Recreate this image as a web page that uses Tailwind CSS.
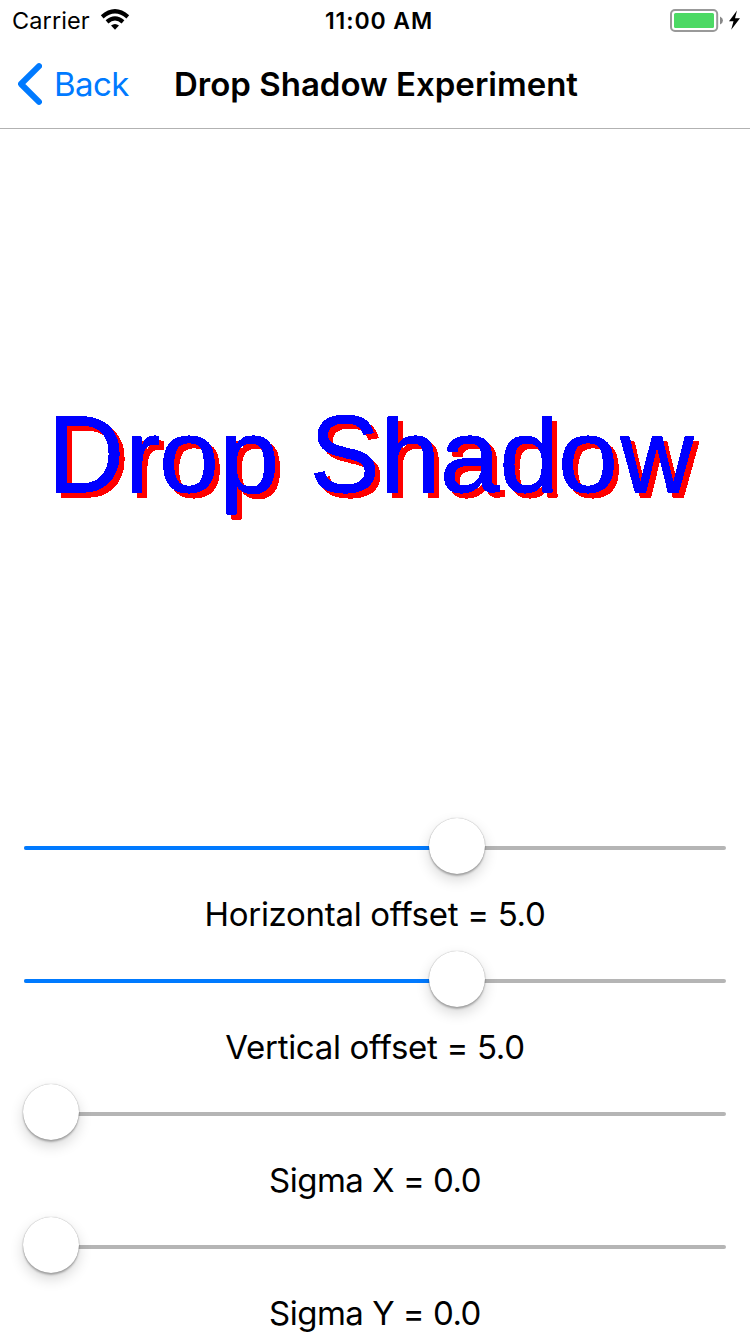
<!DOCTYPE html>
<html lang="en"><head><meta charset="utf-8"><title>Drop Shadow Experiment</title>
<script src="https://cdn.jsdelivr.net/npm/@tailwindcss/browser@4"></script></head>
<body class="bg-white">
<main class="flex h-[1334px] w-[750px] flex-col overflow-hidden bg-white font-['Inter','Liberation_Sans',sans-serif] text-black">
  <header class="h-[129px] shrink-0 border-b border-[#b2b2b2]">
    <div class="grid h-10 grid-cols-3 items-center pl-3 pr-[10px]">
      <div class="flex items-center gap-[10px]">
        <span class="translate-y-px text-[23.5px] leading-10 tracking-[0.1px]">Carrier</span>
        <svg class="h-[22px] w-[30px]" viewBox="0 0 30 22" fill="none" stroke="#000" stroke-width="4.2"><path d="M2.2 7.8Q15-3.2 27.8 7.8M7 12.8Q15 6 23 12.8"/><path d="M11 16.6Q15 13.2 19 16.6L15 20.8Z" fill="#000" stroke="none"/></svg>
      </div>
      <time class="translate-y-px pl-1.5 text-center text-[23px] font-semibold leading-10 tracking-[0.9px] whitespace-nowrap">11:00 AM</time>
      <svg class="h-[24px] w-[70px] justify-self-end" viewBox="670 8 70 24"><rect x="671" y="10" width="46.2" height="21" rx="4" fill="none" stroke="#999" stroke-width="2"/><rect x="674" y="13" width="40" height="15" rx="1.5" fill="#4cd964"/><path d="M720 16.5Q723 18 723 20.5T720 24.5Z" fill="#888"/><path d="M737 10.5L729 21.3H733.5L731.2 29.7L740 18.2H735Z"/></svg>
    </div>
    <nav class="grid h-[88px] grid-cols-[174px_1fr] items-center">
      <a class="flex items-center gap-3 pl-[18px] text-[#007aff]"><svg class="h-[42px] w-[24px]" viewBox="0 0 24 42" fill="none" stroke="currentColor" stroke-width="6" stroke-linecap="round" stroke-linejoin="round"><path d="M21 3.2L3 21L21 38.8"/></svg><span class="text-[33px] leading-10 tracking-[-0.6px]">Back</span></a>
      <h1 class="text-[33px] font-semibold leading-10 whitespace-nowrap">Drop Shadow Experiment</h1>
    </nav>
  </header>
  <section class="h-[667px] shrink-0">
    <svg class="h-full w-full" viewBox="0 129 750 667">
      <defs><filter id="shadow" x="0" y="380" width="750" height="170" filterUnits="userSpaceOnUse" color-interpolation-filters="sRGB">
        <feComponentTransfer in="SourceAlpha" result="mask"><feFuncA type="discrete" tableValues="0 0 1 1 1"/></feComponentTransfer>
        <feFlood flood-color="#00f"/><feComposite in2="mask" operator="in" result="face"/>
        <feOffset in="mask" dx="5" dy="5" result="shift"/>
        <feFlood flood-color="#f00"/><feComposite in2="shift" operator="in" result="cast"/>
        <feMerge><feMergeNode in="cast"/><feMergeNode in="face"/></feMerge></filter></defs>
      <g filter="url(#shadow)" font-family="Liberation Sans, Arial, sans-serif" font-size="107" stroke="#000" stroke-width="1"><text transform="translate(47.9 492.4) scale(.985 1.025)">D</text><text transform="translate(0 492.4) scale(1 .973)" x="125.1 159.2 219.5">rop</text><text transform="translate(310 492.4) scale(.975 1.025)">S</text><text transform="translate(0 492.4) scale(1 .973)" x="380.5 440 499.4 558.2">hado</text><text transform="translate(620.5 492.4) scale(.945 .973)">w</text></g>
    </svg>
  </section>
  <section class="flex flex-col">
    <div class="h-[133px]">
      <div class="relative mx-6 mt-[50px] h-1 rounded-full bg-[#b5b5b5]"><div class="h-1 w-[410px] rounded-full bg-[#007aff]"></div><div class="absolute left-[405px] -top-7 size-14 rounded-full bg-white shadow-[0_0_1px_rgba(0,0,0,.4),0_2px_2px_rgba(0,0,0,.25),0_6px_14px_rgba(0,0,0,.16)]"></div></div>
      <p class="mt-11 text-center text-[33px] leading-10 tracking-[-0.3px]">Horizontal offset = 5.0</p>
    </div>
    <div class="h-[133px]">
      <div class="relative mx-6 mt-[50px] h-1 rounded-full bg-[#b5b5b5]"><div class="h-1 w-[410px] rounded-full bg-[#007aff]"></div><div class="absolute left-[405px] -top-7 size-14 rounded-full bg-white shadow-[0_0_1px_rgba(0,0,0,.4),0_2px_2px_rgba(0,0,0,.25),0_6px_14px_rgba(0,0,0,.16)]"></div></div>
      <p class="mt-11 text-center text-[33px] leading-10 tracking-[-0.3px]">Vertical offset = 5.0</p>
    </div>
    <div class="h-[133px]">
      <div class="relative mx-6 mt-[50px] h-1 rounded-full bg-[#b5b5b5]"><div class="absolute -left-px -top-7 size-14 rounded-full bg-white shadow-[0_0_1px_rgba(0,0,0,.4),0_2px_2px_rgba(0,0,0,.25),0_6px_14px_rgba(0,0,0,.16)]"></div></div>
      <p class="mt-11 text-center text-[33px] leading-10 tracking-[-0.5px]">Sigma X = 0.0</p>
    </div>
    <div class="h-[133px]">
      <div class="relative mx-6 mt-[50px] h-1 rounded-full bg-[#b5b5b5]"><div class="absolute -left-px -top-7 size-14 rounded-full bg-white shadow-[0_0_1px_rgba(0,0,0,.4),0_2px_2px_rgba(0,0,0,.25),0_6px_14px_rgba(0,0,0,.16)]"></div></div>
      <p class="mt-11 text-center text-[33px] leading-10 tracking-[-0.5px]">Sigma Y = 0.0</p>
    </div>
  </section>
</main>
</body></html>
